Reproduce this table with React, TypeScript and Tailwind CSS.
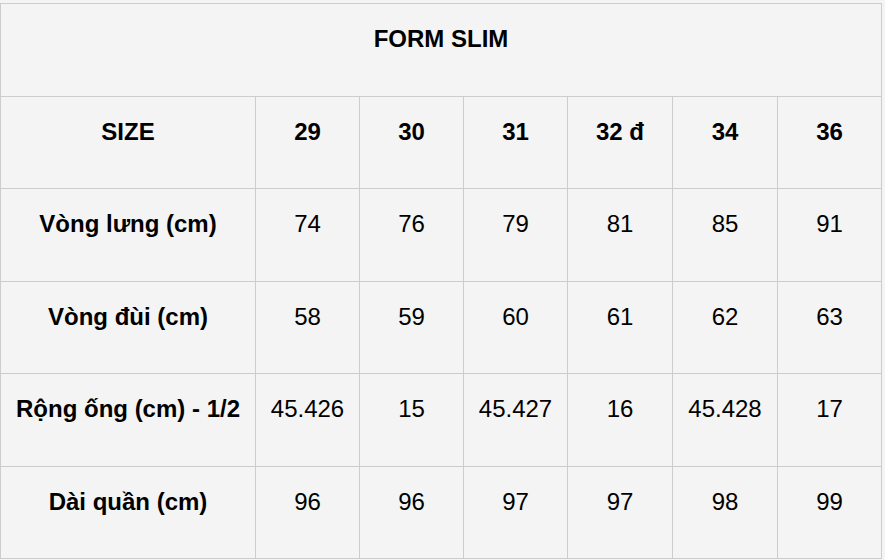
import React from "react";

const widthClasses = ["w-[255px]", "w-[104px]", "w-[104px]", "w-[104px]", "w-[105px]", "w-[105px]", "w-[104px]"];
const heightClasses = ["h-[92px]", "h-[93px]", "h-[92px]", "h-[93px]", "h-[92px]"];

const rows: { label: string; values: string[]; bold?: boolean }[] = [
  { label: "SIZE", values: ["29", "30", "31", "32 đ", "34", "36"], bold: true },
  { label: "Vòng lưng (cm)", values: ["74", "76", "79", "81", "85", "91"] },
  { label: "Vòng đùi (cm)", values: ["58", "59", "60", "61", "62", "63"] },
  { label: "Rộng ống (cm) - 1/2", values: ["45.426", "15", "45.427", "16", "45.428", "17"] },
  { label: "Dài quần (cm)", values: ["96", "96", "97", "97", "98", "99"] },
];

export default function App() {
  return (
    <div className="w-[885px] h-[560px] bg-[#f4f4f4] pt-[3px] text-black overflow-hidden font-['Liberation_Sans',Arial,sans-serif]">
      <div className="w-[882px] border-l border-t border-[#cccccc] text-[24px] leading-[28px]">
        <div className="h-[93px] border-r border-b border-[#cccccc] pt-[21px] text-center font-bold">
          FORM SLIM
        </div>
        {rows.map((r, i) => (
          <div key={i} className={`flex ${heightClasses[i]}`}>
            <div
              className={`${widthClasses[0]} border-r border-b border-[#cccccc] pt-[21px] text-center font-bold whitespace-nowrap`}
            >
              {r.label}
            </div>
            {r.values.map((v, j) => (
              <div
                key={j}
                className={`${widthClasses[j + 1]} border-r border-b border-[#cccccc] pt-[21px] text-center whitespace-nowrap ${r.bold ? "font-bold" : "font-normal"}`}
              >
                {v}
              </div>
            ))}
          </div>
        ))}
      </div>
    </div>
  );
}
